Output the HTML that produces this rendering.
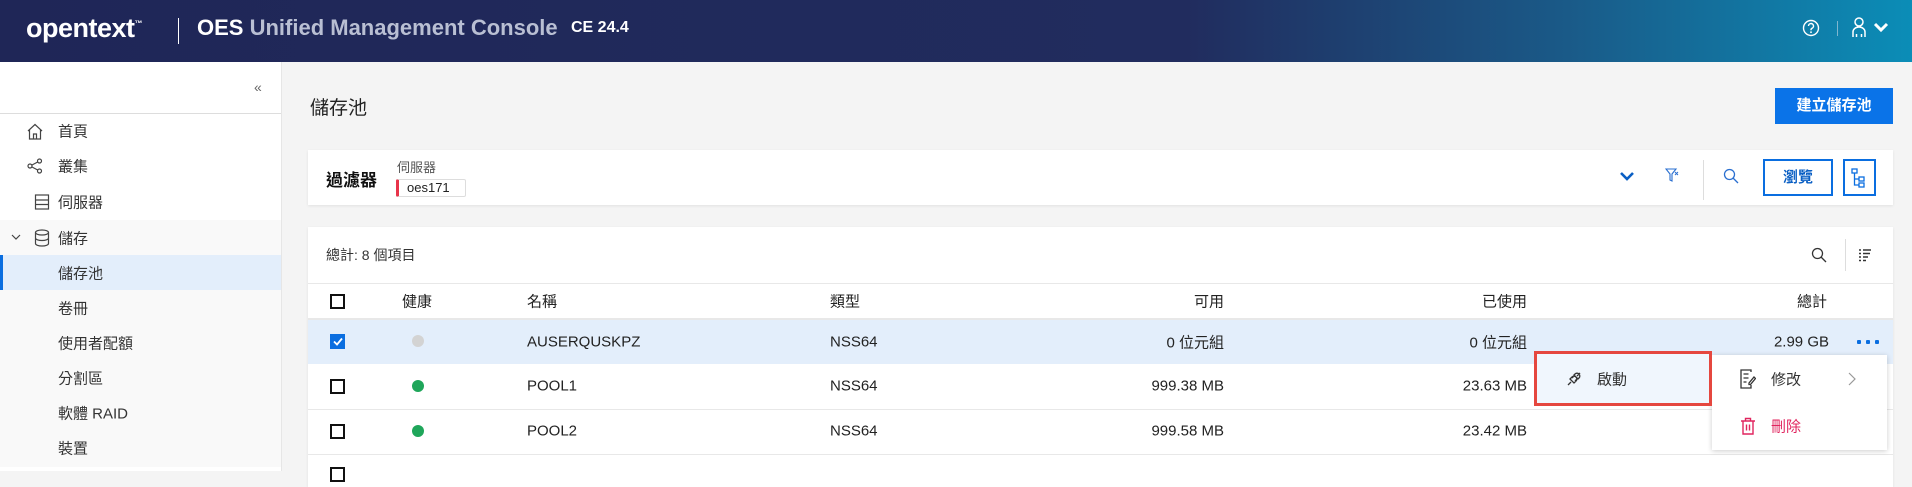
<!DOCTYPE html>
<html><head><meta charset="utf-8">
<style>
*{box-sizing:border-box;margin:0;padding:0}
body{width:1912px;height:471px;overflow:hidden;background:#f4f4f4;font-family:"Liberation Sans","Noto Sans CJK TC",sans-serif;color:#222;position:relative;font-size:15px}
.abs{position:absolute}
.hdr{left:0;top:0;width:1912px;height:62px;background:linear-gradient(90deg,#1f2657 0%,#212c5e 62%,#1a5a88 82%,#0b8db7 100%);color:#fff}
.side{left:0;top:62px;width:282px;height:409px;background:#fff;border-right:1px solid #e6e6e6}
.nav{position:absolute;left:58px;font-size:15px;color:#333;transform:translateY(-50%)}
.card{background:#fff;box-shadow:0 1px 3px rgba(0,0,0,.08)}
.cb{position:absolute;left:330px;width:15px;height:15px;border:2px solid #111;background:#fff}
.dot{position:absolute;left:412px;width:12px;height:12px;border-radius:50%;background:#1fa65a}
.t{position:absolute;transform:translateY(-50%);font-size:15px;color:#222;white-space:nowrap}
.r{text-align:right}
.hl{position:absolute;left:308px;width:1585px;height:1px;background:#e8e8e8}
</style></head><body>
<div class="abs hdr">
  <div class="abs" style="left:26px;top:13px;font-size:27px;font-weight:bold;letter-spacing:-0.5px">opentext<span style="font-size:8px;vertical-align:top;position:relative;top:6px">™</span></div>
  <div class="abs" style="left:178px;top:18px;width:1px;height:26px;background:#fff"></div>
  <div class="abs" style="left:197px;top:15px;font-size:22px;font-weight:bold;color:#fff">OES <span style="color:#b9bfd3">Unified Management Console</span></div>
  <div class="abs" style="left:571px;top:19px;font-size:16px;font-weight:bold">CE 24.4</div>
  <svg class="abs" style="left:1802px;top:19px" width="18" height="18" viewBox="0 0 18 18"><circle cx="9" cy="9" r="7.5" fill="none" stroke="#fff" stroke-width="1.4"/><path d="M6.5 7a2.5 2.5 0 1 1 3.5 2.3c-.7.3-1 .8-1 1.5v.5" fill="none" stroke="#fff" stroke-width="1.4"/><circle cx="9" cy="13.2" r=".9" fill="#fff"/></svg>
  <div class="abs" style="left:1837px;top:21px;width:1px;height:15px;background:#7fb6cf"></div>
  <svg class="abs" style="left:1852px;top:17px" width="14" height="20" viewBox="0 0 14 20"><circle cx="7" cy="5" r="4" fill="none" stroke="#fff" stroke-width="1.5"/><path d="M1 20v-5a6 5 0 0 1 12 0v5M4.5 20v-3M9.5 20v-3" fill="none" stroke="#fff" stroke-width="1.5"/></svg>
  <svg class="abs" style="left:1873px;top:22px" width="16" height="12" viewBox="0 0 16 12"><path d="M2 2l6 6 6-6" fill="none" stroke="#fff" stroke-width="3"/></svg>
</div>

<div class="abs side">
  <div class="abs" style="left:254px;top:17px;font-size:14px;color:#666">«</div>
  <div class="abs" style="left:0;top:51px;width:281px;height:1px;background:#ddd"></div>
  <div class="abs" style="left:0;top:158px;width:281px;height:247px;background:#f9f9f9"></div>
  <div class="abs" style="left:0;top:193px;width:281px;height:35px;background:#e3eefb"></div>
  <div class="abs" style="left:0;top:193px;width:3px;height:35px;background:#0a6ee0"></div>
</div>
<svg class="abs" style="left:27px;top:123px" width="16" height="17" viewBox="0 0 16 17"><path d="M1 8L8 1.5 15 8M2.5 6.5V16h11V6.5M6.5 16v-5h3v5" fill="none" stroke="#444" stroke-width="1.2"/></svg>
<div class="nav" style="top:131px">首頁</div>
<svg class="abs" style="left:27px;top:158px" width="16" height="16" viewBox="0 0 16 16"><circle cx="3" cy="8" r="2" fill="none" stroke="#444" stroke-width="1.2"/><circle cx="12.5" cy="3" r="2" fill="none" stroke="#444" stroke-width="1.2"/><circle cx="12.5" cy="13" r="2" fill="none" stroke="#444" stroke-width="1.2"/><path d="M5 7l5.7-3M5 9l5.7 3" stroke="#444" stroke-width="1.2"/></svg>
<div class="nav" style="top:166px">叢集</div>
<svg class="abs" style="left:34px;top:194px" width="16" height="16" viewBox="0 0 16 16"><rect x="1.5" y="1" width="13" height="14" fill="none" stroke="#444" stroke-width="1.2"/><path d="M1.5 6h13M1.5 10.5h13" stroke="#444" stroke-width="1.2"/></svg>
<div class="nav" style="top:202px">伺服器</div>
<svg class="abs" style="left:11px;top:234px" width="10" height="7" viewBox="0 0 10 7"><path d="M1 1l4 4 4-4" fill="none" stroke="#444" stroke-width="1.2"/></svg>
<svg class="abs" style="left:34px;top:229px" width="16" height="18" viewBox="0 0 16 18"><ellipse cx="8" cy="3.5" rx="6.5" ry="2.5" fill="none" stroke="#444" stroke-width="1.2"/><path d="M1.5 3.5v11c0 1.4 2.9 2.5 6.5 2.5s6.5-1.1 6.5-2.5v-11M1.5 9c0 1.4 2.9 2.5 6.5 2.5s6.5-1.1 6.5-2.5" fill="none" stroke="#444" stroke-width="1.2"/></svg>
<div class="nav" style="top:238px">儲存</div>
<div class="nav" style="top:273px">儲存池</div>
<div class="nav" style="top:308px">卷冊</div>
<div class="nav" style="top:343px">使用者配額</div>
<div class="nav" style="top:378px">分割區</div>
<div class="nav" style="top:413px">軟體 RAID</div>
<div class="nav" style="top:448px">裝置</div>

<div class="abs" style="left:310px;top:93px;font-size:19px;color:#222">儲存池</div>
<div class="abs" style="left:1775px;top:88px;width:118px;height:36px;background:#0a73e8;color:#fff;font-size:15px;font-weight:bold;text-align:center;line-height:36px">建立儲存池</div>

<div class="abs card" style="left:308px;top:150px;width:1585px;height:55px"></div>
<div class="abs" style="left:326px;top:166px;font-size:17px;font-weight:bold;color:#111">過濾器</div>
<div class="abs" style="left:397px;top:157px;font-size:13px;color:#555">伺服器</div>
<div class="abs" style="left:396px;top:179px;width:70px;height:18px;border:1px solid #ddd;border-left:3px solid #e8344a;border-radius:2px;font-size:13px;line-height:16px;padding-left:8px;color:#222">oes171</div>
<svg class="abs" style="left:1619px;top:171px" width="16" height="11" viewBox="0 0 16 11"><path d="M2 2l6 6 6-6" fill="none" stroke="#0a5fc4" stroke-width="2.6"/></svg>
<svg class="abs" style="left:1665px;top:167px" width="14" height="16" viewBox="0 0 14 16"><path d="M1 2h10L7 7v7l-2-1V7z" fill="none" stroke="#2a6fd0" stroke-width="1.1"/><path d="M10 5l3 3M13 5l-3 3" stroke="#2a6fd0" stroke-width="1"/></svg>
<div class="abs" style="left:1703px;top:160px;width:1px;height:40px;background:#ddd"></div>
<svg class="abs" style="left:1723px;top:168px" width="16" height="16" viewBox="0 0 16 16"><circle cx="6.5" cy="6.5" r="5" fill="none" stroke="#2a6fd0" stroke-width="1.3"/><path d="M10 10l5 5" stroke="#2a6fd0" stroke-width="1.3"/></svg>
<div class="abs" style="left:1763px;top:159px;width:70px;height:37px;border:2px solid #0a6ee0;color:#0a5fc4;font-size:15px;text-align:center;line-height:33px;font-weight:bold">瀏覽</div>
<div class="abs" style="left:1843px;top:159px;width:33px;height:37px;border:2px solid #0a6ee0"></div>
<svg class="abs" style="left:1851px;top:168px" width="16" height="20" viewBox="0 0 16 20"><rect x="1" y="1" width="5" height="4" fill="none" stroke="#0a6ee0" stroke-width="1.3"/><rect x="8" y="9" width="5" height="4" fill="none" stroke="#0a6ee0" stroke-width="1.3"/><rect x="8" y="15" width="5" height="4" fill="none" stroke="#0a6ee0" stroke-width="1.3"/><path d="M3.5 5v12H8M3.5 11H8" fill="none" stroke="#0a6ee0" stroke-width="1.3"/></svg>

<div class="abs card" style="left:308px;top:227px;width:1585px;height:260px"></div>
<div class="t" style="left:326px;top:255px;font-size:14px;color:#333">總計: 8 個項目</div>
<svg class="abs" style="left:1811px;top:247px" width="16" height="16" viewBox="0 0 16 16"><circle cx="6.5" cy="6.5" r="5" fill="none" stroke="#333" stroke-width="1.3"/><path d="M10 10l5 5" stroke="#333" stroke-width="1.3"/></svg>
<div class="abs" style="left:1845px;top:239px;width:1px;height:32px;background:#ddd"></div>
<svg class="abs" style="left:1858px;top:248px" width="14" height="14" viewBox="0 0 14 14"><path d="M1 2h2M5 2h8M1 5.5h2M5 5.5h7M1 9h2M5 9h5M1 12.5h2M5 12.5h3" stroke="#333" stroke-width="1.6"/></svg>
<div class="hl" style="top:283px"></div>
<div class="hl" style="top:318px;height:2px"></div>
<div class="abs" style="left:308px;top:320px;width:1585px;height:44px;background:#e3eefb"></div>
<div class="hl" style="top:409px"></div>
<div class="hl" style="top:454px"></div>

<div class="cb" style="top:294px"></div>
<div class="t" style="left:402px;top:301px">健康</div>
<div class="t" style="left:527px;top:301px">名稱</div>
<div class="t" style="left:830px;top:301px">類型</div>
<div class="t r" style="right:688px;top:301px">可用</div>
<div class="t r" style="right:385px;top:301px">已使用</div>
<div class="t r" style="right:85px;top:301px">總計</div>

<div class="cb" style="top:334px;background:#0a6ee0;border-color:#0a6ee0"></div>
<svg class="abs" style="left:333px;top:337px" width="10" height="9" viewBox="0 0 10 9"><path d="M1 4.5l3 3L9 1.5" fill="none" stroke="#fff" stroke-width="1.8"/></svg>
<div class="dot" style="top:335px;background:#d3d3d3"></div>
<div class="t" style="left:527px;top:342px">AUSERQUSKPZ</div>
<div class="t" style="left:830px;top:342px">NSS64</div>
<div class="t r" style="right:688px;top:342px">0 位元組</div>
<div class="t r" style="right:385px;top:342px">0 位元組</div>
<div class="t r" style="right:83px;top:342px">2.99 GB</div>
<div class="abs" style="left:1857px;top:340px;width:4px;height:4px;background:#0a6ee0;border-radius:1px;box-shadow:9px 0 #0a6ee0,18px 0 #0a6ee0"></div>

<div class="cb" style="top:379px"></div>
<div class="dot" style="top:380px"></div>
<div class="t" style="left:527px;top:386px">POOL1</div>
<div class="t" style="left:830px;top:386px">NSS64</div>
<div class="t r" style="right:688px;top:386px">999.38 MB</div>
<div class="t r" style="right:385px;top:386px">23.63 MB</div>

<div class="cb" style="top:424px"></div>
<div class="dot" style="top:425px"></div>
<div class="t" style="left:527px;top:431px">POOL2</div>
<div class="t" style="left:830px;top:431px">NSS64</div>
<div class="t r" style="right:688px;top:431px">999.58 MB</div>
<div class="t r" style="right:385px;top:431px">23.42 MB</div>
<div class="cb" style="top:467px"></div>

<div class="abs" style="left:1712px;top:355px;width:175px;height:95px;background:#fff;box-shadow:0 1px 5px rgba(0,0,0,.2)"></div>
<svg class="abs" style="left:1740px;top:369px" width="16" height="20" viewBox="0 0 16 20"><path d="M11 3V1H1v18h10v-3M3.5 5h5M3.5 9h5M3.5 13h3M9 14l5-6 1.5 1.5-5 6H9z" fill="none" stroke="#333" stroke-width="1.3"/></svg>
<div class="t" style="left:1771px;top:379px;color:#333">修改</div>
<svg class="abs" style="left:1848px;top:372px" width="8" height="14" viewBox="0 0 8 14"><path d="M1 1l6 6-6 6" fill="none" stroke="#999" stroke-width="1.2"/></svg>
<svg class="abs" style="left:1740px;top:417px" width="16" height="18" viewBox="0 0 16 18"><path d="M1 4h14M5.5 4V1.5h5V4M3 4v13h10V4M6.5 7.5v6M9.5 7.5v6" fill="none" stroke="#e0245e" stroke-width="1.4"/></svg>
<div class="t" style="left:1771px;top:426px;color:#e0245e">刪除</div>

<div class="abs" style="left:1534px;top:351px;width:178px;height:55px;background:#f0f6fd;border:3px solid #e5473f"></div>
<svg class="abs" style="left:1565px;top:370px" width="18" height="18" viewBox="0 0 18 18"><path d="M3 15l3-3M15 3l-3 3M5 9l4 4 2-2a2.8 2.8 0 0 0-4-4zM9 5l4 4 1-1a2.8 2.8 0 0 0-4-4zM7 8l1.5-1.5M10 11l1.5-1.5" fill="none" stroke="#333" stroke-width="1.3"/></svg>
<div class="t" style="left:1597px;top:379px;color:#333">啟動</div>
</body></html>
